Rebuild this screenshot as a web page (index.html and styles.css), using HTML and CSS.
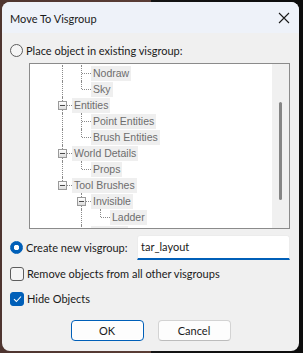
FILE: index.html
```html
<!DOCTYPE html>
<html lang="en">
<head>
    <meta charset="UTF-8">
    <title>Move To Visgroup</title>
    <link rel="stylesheet" href="styles.css">
</head>
<body>
    <div class="window">
        <div class="titlebar">
            <span class="title">Move To Visgroup</span>
            <svg class="close" width="12" height="12" viewBox="0 0 12 12">
                <path d="M1 1 L11 11 M11 1 L1 11" stroke="#1a1a1a" stroke-width="1.1" fill="none"/>
            </svg>
        </div>

        <div class="content">
            <label class="option">
                <span class="radio"></span>
                Place object in existing visgroup:
            </label>

            <!-- visgroup tree (disabled) -->
            <div class="tree">
                <div class="tree-rows">
                    <div class="row"><span class="cell pipe"></span><span class="cell tee"></span><span class="item">Nodraw</span></div>
                    <div class="row"><span class="cell pipe"></span><span class="cell corner"></span><span class="item">Sky</span></div>
                    <div class="row"><span class="cell tee"><i class="minus"></i></span><span class="item">Entities</span></div>
                    <div class="row"><span class="cell pipe"></span><span class="cell tee"></span><span class="item">Point Entities</span></div>
                    <div class="row"><span class="cell pipe"></span><span class="cell corner"></span><span class="item">Brush Entities</span></div>
                    <div class="row"><span class="cell tee"><i class="minus"></i></span><span class="item">World Details</span></div>
                    <div class="row"><span class="cell pipe"></span><span class="cell corner"></span><span class="item">Props</span></div>
                    <div class="row"><span class="cell corner"><i class="minus"></i></span><span class="item">Tool Brushes</span></div>
                    <div class="row"><span class="cell"></span><span class="cell tee"><i class="minus"></i></span><span class="item">Invisible</span></div>
                    <div class="row"><span class="cell"></span><span class="cell pipe"></span><span class="cell corner"></span><span class="item">Ladder</span></div>
                    <div class="row"><span class="cell"></span><span class="cell tee"></span><span class="item blank"></span></div>
                </div>
                <div class="scrollbar"><div class="thumb"></div></div>
            </div>

            <div class="option new-group">
                <span class="radio checked"></span>
                <span class="label">Create new visgroup:</span>
                <div class="textbox">tar_layout</div>
            </div>

            <label class="option check-row">
                <span class="checkbox"></span>
                Remove objects from all other visgroups
            </label>

            <label class="option check-row">
                <span class="checkbox checked">
                    <svg width="9" height="8" viewBox="0 0 9 8"><path d="M1 4.2 L3.4 6.5 L8 1.5" stroke="#fff" stroke-width="1.1" fill="none"/></svg>
                </span>
                Hide Objects
            </label>

            <div class="buttons">
                <button class="btn default">OK</button>
                <button class="btn">Cancel</button>
            </div>
        </div>
    </div>
</body>
</html>
```

FILE: styles.css
```css
body {
    margin: 0;
    padding: 0;
    width: 303px;
    height: 353px;
    overflow: hidden;
    background: linear-gradient(90deg, #4e3530 0, #5a3d35 50%, #141414 50%, #0c0c0c 100%);
    font-family: Lato, sans-serif;
    font-size: 11px;
    color: #1a1a1a;
}
.window {
    margin: 2px 0 0 2px;
    width: 297px;
    height: 349px;
    border-radius: 8px;
    background: #f0f0f0;
    overflow: hidden;
}
.titlebar {
    height: 31px;
    background: #eef2f9;
    display: flex;
    align-items: center;
    justify-content: space-between;
    padding: 0 9px 0 8px;
}
.title {
    font-size: 11px;
    padding-top: 2px;
}
.close {
    margin-top: 1px;
}

.content {
    padding: 7px 9px 0 8px;
}
.option {
    display: flex;
    align-items: center;
    gap: 3px;
    height: 20px;
}
.radio {
    width: 11px;
    height: 11px;
    border: 1px solid #5d5d5d;
    border-radius: 50%;
    background: #f5f5f5;
    flex: none;
}
.radio.checked {
    border-color: #005fb8;
    background: radial-gradient(circle, #fff 0 2.5px, #005fb8 3px);
}

/* Tree */
.tree {
    margin: 3px 0 0 19px;
    width: 259px;
    height: 164px;
    border: 1px solid #8b8b8b;
    background: #fff;
    display: flex;
    overflow: hidden;
}
.tree-rows {
    flex: 1;
    overflow: hidden;
    padding: 1px 0 0 23px;
    font-family: "Liberation Sans", Arial, sans-serif;
    font-size: 10.5px;
    color: #6d6d6d;
}
.row {
    display: flex;
    height: 16px;
    align-items: center;
}
.cell {
    position: relative;
    width: 19px;
    height: 16px;
    flex: none;
}
.pipe::before, .tee::before, .corner::before {
    content: "";
    position: absolute;
    left: 9px;
    top: 0;
    height: 16px;
    border-left: 1px dotted #8a8a8a;
}
.corner::before {
    height: 8px;
}
.tee::after, .corner::after {
    content: "";
    position: absolute;
    left: 10px;
    top: 8px;
    width: 9px;
    border-top: 1px dotted #8a8a8a;
}
.minus {
    position: absolute;
    left: 5px;
    top: 4px;
    width: 7px;
    height: 7px;
    border: 1px solid #9a9a9a;
    background: linear-gradient(#fff, #dcdcdc);
    z-index: 1;
}
.minus::after {
    content: "";
    position: absolute;
    left: 1px;
    top: 3px;
    width: 5px;
    height: 1px;
    background: #4a4a4a;
}
.item {
    background: #efefef;
    padding: 0 2px;
    height: 15px;
    line-height: 15px;
    white-space: nowrap;
}
.item.blank {
    width: 33px;
}
.scrollbar {
    width: 17px;
    background: #f0f0f0;
    flex: none;
    display: flex;
    justify-content: center;
    padding-top: 38px;
}
.thumb {
    width: 3px;
    height: 98px;
    border-radius: 2px;
    background: #858585;
}

/* Create new visgroup */
.new-group {
    margin-top: 6px;
    height: 24px;
}
.new-group .label {
    width: 108px;
    flex: none;
    white-space: nowrap;
}
.textbox {
    width: 151px;
    height: 22px;
    line-height: 21px;
    background: #fff;
    border: 1px solid #ececec;
    border-bottom: 2px solid #005fb8;
    border-radius: 3px 3px 0 0;
    padding-left: 3px;
}

.check-row {
    margin-top: 4px;
    height: 21px;
}
.checkbox {
    width: 12px;
    height: 12px;
    border: 1px solid #5d5d5d;
    border-radius: 3px;
    background: #f5f5f5;
    flex: none;
    display: flex;
    align-items: center;
    justify-content: center;
}
.checkbox.checked {
    border-color: #005fb8;
    background: #005fb8;
}

.buttons {
    display: flex;
    justify-content: center;
    gap: 14px;
    margin-top: 11px;
    padding-left: 1px;
}
.btn {
    width: 73px;
    height: 21px;
    font-family: Lato, sans-serif;
    font-size: 11px;
    color: #1a1a1a;
    background: #fdfdfd;
    border: 1px solid #d3d3d3;
    border-bottom-color: #bcbcbc;
    border-radius: 4px;
    padding: 0;
}
.btn.default {
    border: 1px solid #005fb8;
    box-shadow: inset 0 0 0 1px #fff;
}
```
